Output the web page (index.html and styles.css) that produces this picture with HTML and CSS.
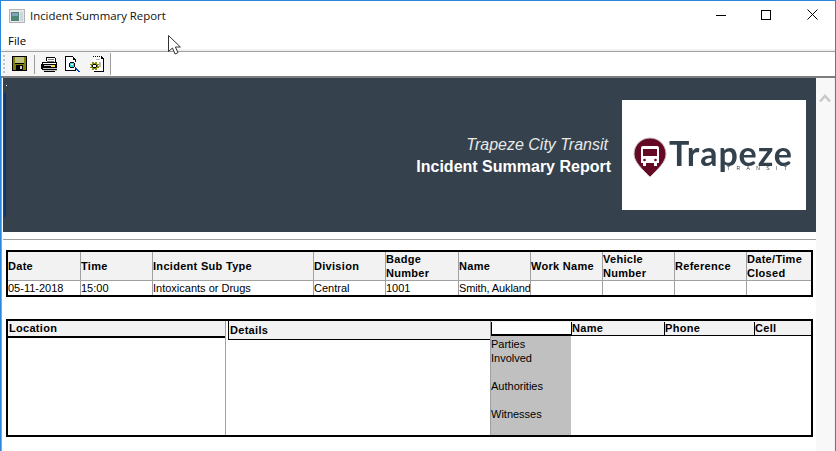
FILE: index.html
```html
<!DOCTYPE html>
<html lang="en">
<head>
<meta charset="utf-8">
<title>Incident Summary Report</title>
<link rel="stylesheet" href="styles.css">
</head>
<body>
<div class="window">
  <header class="titlebar">
    <svg class="app-icon" width="16" height="14" viewBox="0 0 16 14" shape-rendering="crispEdges">
      <rect x="0" y="0" width="16" height="14" fill="#b4b4b4"/>
      <rect x="1" y="1" width="14" height="12" fill="#e8e8e8"/>
      <rect x="2" y="3" width="8" height="9" fill="#4f8476"/>
      <rect x="3" y="4" width="6" height="3" fill="#7fa3b8"/>
      <rect x="11" y="3" width="3" height="9" fill="#ccd6dc"/>
    </svg>
    <span class="title">Incident Summary Report</span>
    <div class="controls">
      <svg width="10" height="10" viewBox="0 0 10 10" shape-rendering="crispEdges"><rect x="0" y="5" width="10" height="1" fill="#000"/></svg>
      <svg width="10" height="10" viewBox="0 0 10 10" shape-rendering="crispEdges"><rect x="0.5" y="0.5" width="9" height="9" fill="none" stroke="#000"/></svg>
      <svg class="close" width="11" height="11" viewBox="0 0 11 11"><path d="M.5.5l10 10M10.5.5l-10 10" fill="none" stroke="#000" stroke-width="1"/></svg>
    </div>
  </header>
  <nav class="menubar"><span>File</span></nav>
  <div class="toolbar">
    <div class="tools">
      <span class="grip"></span>
      <svg class="tool tool-save" width="15" height="15" viewBox="0 0 15 15" shape-rendering="crispEdges">
        <rect x="0" y="0" width="15" height="15" fill="#000"/>
        <rect x="1" y="1" width="13" height="13" fill="#808000"/>
        <rect x="3" y="1" width="9" height="6" fill="#c0c080"/>
        <rect x="3" y="7" width="9" height="1" fill="#000"/>
        <rect x="4" y="9" width="7" height="5" fill="#000"/>
        <rect x="8" y="10" width="2" height="3" fill="#c8c8c8"/>
      </svg>
      <span class="tool-sep"></span>
      <svg class="tool tool-print" width="17" height="15" viewBox="0 0 17 15" shape-rendering="crispEdges">
        <path d="M5 0h9v1h1v4h-1V1H6v3H5z" fill="#000"/>
        <rect x="6" y="1" width="8" height="4" fill="#fff"/>
        <path d="M7 2h6v1H7zM6 4h7v1H6z" fill="#777"/>
        <rect x="1" y="5" width="15" height="6" fill="#000"/>
        <rect x="2" y="6" width="13" height="1" fill="#fff"/>
        <rect x="3" y="8" width="7" height="1" fill="#c8c8c8"/>
        <rect x="10" y="8" width="4" height="2" fill="#ffe14a"/>
        <rect x="0" y="7" width="2" height="5" fill="#000"/>
        <rect x="2" y="11" width="14" height="3" fill="#c0c0c0"/>
        <rect x="1" y="12" width="15" height="1" fill="#000"/>
        <rect x="3" y="14" width="11" height="1" fill="#000"/>
      </svg>
      <svg class="tool tool-preview" width="16" height="16" viewBox="0 0 16 16" shape-rendering="crispEdges">
        <rect x="1" y="1" width="9" height="13" fill="#fff"/>
        <path d="M0 0h8v1h1v1h1v1h1v3h-1V4H8V1H1v13h9v-1h1v2H0z" fill="#000"/>
        <path d="M5 6h4v1h1v4H9v1H5v-1H4V7h1z" fill="#000"/>
        <rect x="5" y="7" width="4" height="4" fill="#3fd0e8"/>
        <rect x="6" y="8" width="2" height="1" fill="#fff"/>
        <path d="M10 11h1v1h1v1h1v1h1v1h1v1h-2v-1h-1v-1h-1v-1h-1z" fill="#0a3fb8"/>
      </svg>
      <svg class="tool tool-setup" width="16" height="16" viewBox="0 0 16 16" shape-rendering="crispEdges">
        <rect x="4" y="1" width="10" height="14" fill="#fff"/>
        <path d="M4 0h1v1H4zM6 0h1v1H6zM8 0h1v1H8zM10 0h1v1h-1zM12 0h1v1h1v1h1v14H5v-1h9V3h-2V1h0z" fill="#000"/>
        <path d="M3 6h2v1h1V6h2v2h2v1H9v1h1v2H8v2H6v-1H5v1H3v-2H1v-1h1V9H1V8h2z" fill="#8a8a10"/>
        <path d="M4 8h3v1h1v2H7v1H4v-1H3V9h1z" fill="#000"/>
        <rect x="4" y="9" width="3" height="2" fill="#fff"/>
        <path d="M7 3h4v1H7zM10 6h2v5h-2z" fill="#b8b8b8"/>
      </svg>
      <span class="tool-sep tool-end"></span>
    </div>
  </div>
  <div class="viewport">
    <main class="report">
      <section class="banner">
        <span class="banner-dot"></span>
        <span class="banner-edge"></span>
        <div class="banner-text">
          <div class="company">Trapeze City Transit</div>
          <div class="report-name">Incident Summary Report</div>
        </div>
        <div class="logo">
          <svg class="pin" width="34" height="41" viewBox="0 0 34 41">
            <path d="M17 1C8 1 1 8 1 17c0 8 8 15 16 23 8-8 16-15 16-23C33 8 26 1 17 1z" fill="#650a25" stroke="#c9c4c5" stroke-width="1"/>
            <path d="M10 9h14q2 0 2 2v15h-2v3h-3v-3h-8v3h-3v-3H8V11q0-2 2-2z" fill="#fff"/>
            <rect x="10" y="12" width="14" height="7" fill="#650a25"/>
            <circle cx="11.5" cy="23" r="1.3" fill="#650a25"/>
            <circle cx="22.5" cy="23" r="1.3" fill="#650a25"/>
          </svg>
          <div class="wordmark">
            <span class="brand">Trapeze</span>
            <span class="brand-sub">TRANSIT</span>
          </div>
        </div>
      </section>
      <hr class="rule">
      <section class="summary">
        <div class="cell head">Date</div>
        <div class="cell head">Time</div>
        <div class="cell head">Incident Sub Type</div>
        <div class="cell head">Division</div>
        <div class="cell head">Badge Number</div>
        <div class="cell head">Name</div>
        <div class="cell head">Work Name</div>
        <div class="cell head">Vehicle Number</div>
        <div class="cell head">Reference</div>
        <div class="cell head">Date/Time Closed</div>
        <div class="cell">05-11-2018</div>
        <div class="cell">15:00</div>
        <div class="cell">Intoxicants or Drugs</div>
        <div class="cell">Central</div>
        <div class="cell">1001</div>
        <div class="cell cell-tight">Smith, Aukland</div>
        <div class="cell"></div>
        <div class="cell"></div>
        <div class="cell"></div>
        <div class="cell"></div>
      </section>
      <section class="details">
        <div class="col col-location">
          <div class="col-head head-location">Location</div>
        </div>
        <div class="col col-details">
          <div class="col-head head-details">Details</div>
        </div>
        <div class="col col-parties">
          <div class="parties-head">
            <div class="ph ph-blank"></div>
            <div class="ph ph-name">Name</div>
            <div class="ph ph-phone">Phone</div>
            <div class="ph ph-cell">Cell</div>
          </div>
          <div class="parties-body">
            <div class="party-types">
              <div>Parties<br>Involved</div>
              <div class="party-gap">Authorities</div>
              <div class="party-gap">Witnesses</div>
            </div>
          </div>
        </div>
      </section>
    </main>
    <aside class="scrollbar">
      <svg width="12" height="9" viewBox="0 0 12 9"><path d="M1 7.5L6 2l5 5.5" fill="none" stroke="#c9c9c9" stroke-width="2.6"/></svg>
    </aside>
  </div>
  <svg class="cursor" width="13" height="20" viewBox="0 0 13 20">
    <path d="M.5.5v16l4-3.5 2.5 6 3-1.3-2.6-5.7h5z" fill="#fff" stroke="#333" stroke-width="1"/>
  </svg>
</div>
</body>
</html>
```
FILE: styles.css
```css
* { box-sizing: border-box; }
html, body { margin: 0; padding: 0; background: #fff; overflow: hidden; }
.window {
  position: relative;
  width: 836px;
  height: 451px;
  border-top: 1px solid #2b88d8;
  border-left: 1px solid #2b88d8;
  border-right: 1px solid #2b88d8;
  display: flex;
  flex-direction: column;
  font-family: "Liberation Sans", Arial, sans-serif;
  color: #000;
  background: #fff;
}
.titlebar {
  height: 30px;
  display: flex;
  align-items: center;
  padding-left: 8px;
  flex: none;
}
.app-icon { margin-right: 5px; margin-top: -1px; }
.title { font: 11.4px "Open Sans", sans-serif; margin-top: -1px; color: #111; }
.controls {
  margin-left: auto;
  display: flex;
  align-items: center;
  gap: 35px;
  padding-right: 17px;
  margin-top: -3px;
}
.close { margin-left: 1px; }
.menubar {
  height: 21px;
  flex: none;
  padding: 1px 0 0 7px;
  font: 11.4px "Open Sans", sans-serif;
  border-bottom: 1px solid #a0a0a0;
  box-shadow: inset 0 -2px 0 #f1f1f1;
  line-height: 17px;
}
.toolbar {
  height: 26px;
  flex: none;
  display: flex;
  background: #fff;
  border-bottom: 2px solid #7d7d7d;
}
.tools {
  width: 109px;
  background: #f5f5f5;
  display: flex;
  align-items: center;
  margin-left: 1px;
  position: relative;
}
.grip {
  width: 2px;
  height: 18px;
  margin-left: 1px;
  background: repeating-linear-gradient(to bottom, #b9c6d3 0 2px, transparent 2px 4px);
}
.tool { flex: none; display: block; }
.tool-save { margin-left: 7px; margin-top: -2px; }
.tool-sep { width: 1px; height: 19px; background: #9c9c9c; margin-left: 7px; flex: none; }
.tool-print { margin-left: 6px; }
.tool-preview { margin-left: 7px; }
.tool-setup { margin-left: 8px; }
.tool-end { margin-left: 5px; height: 22px; }
.viewport { flex: 1; display: flex; min-height: 0; }
.report {
  width: 815px;
  flex: none;
  padding-left: 1px;
  border-left: 1px solid #6aaee6;
  margin-left: 0;
}
.banner {
  position: relative;
  height: 154px;
  background: #35414c;
  margin-left: 0;
  display: flex;
  align-items: flex-start;
  justify-content: flex-end;
  padding: 22px 10px 0 0;
}
.banner-dot { position: absolute; left: 3px; top: 7px; width: 1px; height: 1px; background: #fff; }
.banner-edge { position: absolute; left: 1px; top: 15px; width: 2px; height: 124px; background: #0f3473; }
.banner-text {
  margin-right: 11px;
  text-align: right;
  font-size: 16px;
  color: #fff;
  padding-top: 34px;
  line-height: 22px;
}
.company { font-style: italic; color: #e8e8e8; margin-right: 3px; }
.report-name { font-weight: 700; }
.logo {
  width: 184px;
  height: 110px;
  background: #fff;
  display: flex;
  align-items: flex-start;
  padding: 37px 0 0 11px;
  filter: blur(.35px);
}
.pin { flex: none; }
.wordmark {
  position: relative;
  margin-left: 2px;
  line-height: 1;
  height: 40px;
}
.brand {
  font: 700 34px/26px "Lato", sans-serif;
  color: #33414c;
  letter-spacing: .9px;
  display: block;
  margin-top: 3px;
}
.brand-sub {
  position: absolute;
  left: 58px;
  top: 29px;
  font: 5px/5px "Liberation Sans", sans-serif;
  color: #33414c;
  letter-spacing: 6.4px;
  white-space: nowrap;
}
.rule { height: 1px; border: 0; background: #a0a0a0; margin: 7px 0 0; }
.summary {
  margin: 10px 0 0 3px;
  width: 807px;
  border: 2px solid #000;
  display: grid;
  grid-template-columns: 72px 72px 161px 72px 73px 72px 72px 72px 72px 65px;
  grid-template-rows: 29px 14px;
  font-size: 11px;
  line-height: 14px;
}
.cell {
  border-left: 1px solid #a0a0a0;
  white-space: nowrap;
}
.cell:nth-child(10n+1) { border-left: 0; }
.cell-tight { letter-spacing: -.12px; }
.head {
  background: #f2f2f2;
  border-bottom: 1px solid #a0a0a0;
  font-weight: 700;
  display: flex;
  align-items: center;
  white-space: normal;
  letter-spacing: .3px;
}
.details {
  margin: 22px 0 0 3px;
  width: 807px;
  height: 118px;
  border: 2px solid #000;
  display: grid;
  grid-template-columns: 218px 264px 321px;
  font-size: 11px;
  line-height: 14px;
}
.col { display: flex; flex-direction: column; min-width: 0; }
.col-location { border-right: 1px solid #a0a0a0; }
.col-head, .ph { font-weight: 700; letter-spacing: .3px; background: #f2f2f2; }
.head-location {
  height: 17px;
  border-bottom: 2px solid #000;
  padding-left: 1px;
}
.col-details { padding-left: 2px; }
.head-details {
  height: 19px;
  border-left: 1px solid #000;
  border-bottom: 1px solid #000;
  padding: 2px 0 0 1px;
}
.col-parties { border-left: 1px solid #a0a0a0; }
.parties-head {
  display: grid;
  grid-template-columns: 80px 93px 90px 57px;
  height: 15px;
  border-bottom: 2px solid #000;
  background: #f2f2f2;
}
.ph { border-left: 1px solid #000; line-height: 13px; height: 13px; margin-top: 1px; }
.ph-blank { height: 13px; background: #fff; border-bottom: 1px solid #000; margin-bottom: -1px; margin-top: 1px; }
.parties-body { flex: 1; }
.party-types {
  width: 80px;
  height: 100%;
  background: #c0c0c0;
  padding: 1px 0 0 0;
}
.party-gap { margin-top: 14px; }
.scrollbar {
  flex: 1;
  background: #f8f8f8;
  border-right: 1px solid #efefef;
  padding: 16px 0 0 3px;
}
.scrollbar svg { display: block; }
.cursor { position: absolute; left: 167px; top: 34px; }
```
